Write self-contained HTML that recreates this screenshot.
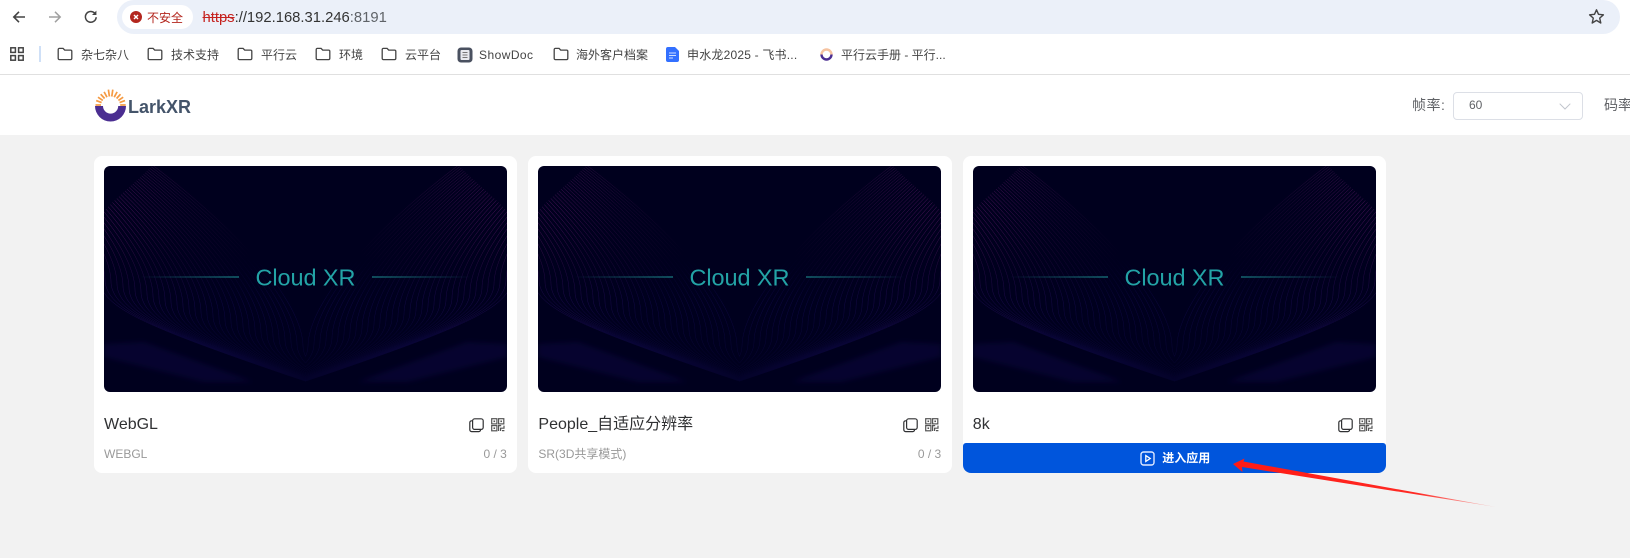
<!DOCTYPE html>
<html lang="zh-CN">
<head>
<meta charset="utf-8">
<title>LarkXR</title>
<style>
html,body{margin:0;padding:0;width:1630px;height:558px;overflow:hidden;background:#f2f2f2;font-family:"Liberation Sans","Noto Sans CJK SC",sans-serif}
.a{position:absolute;white-space:nowrap}
.bm{font-size:12px;line-height:16px;top:47px;color:#444;font-family:"Liberation Sans","Noto Sans CJK SC",sans-serif}
.ic{position:absolute;display:block}
.card{position:absolute;top:156px;width:423.3px;height:317px;background:#fff;border-radius:8px}
.img{position:absolute;left:10px;top:10px;width:403px;height:226px;border-radius:6px;overflow:hidden;background:#00001e}
.t{position:absolute;left:10px;top:259px;font-size:16px;line-height:20px;color:#303133;white-space:nowrap}
.s{position:absolute;left:10px;top:290px;font-size:12px;line-height:16px;color:#999;white-space:nowrap}
.n{position:absolute;right:10.500px;top:290px;font-size:12px;line-height:16px;color:#999;white-space:nowrap}
.cp{position:absolute;left:375px;top:262px}
.qr{position:absolute;left:396.500px;top:261.500px}
</style>
</head>
<body>
<svg width="0" height="0" style="position:absolute">
<defs>
<path id="fo" d="M1.2 2.6a1.2 1.2 0 0 1 1.2-1.2h3.7l1.6 1.7h5.9a1.2 1.2 0 0 1 1.2 1.2v7.1a1.2 1.2 0 0 1-1.2 1.2H2.4a1.2 1.2 0 0 1-1.2-1.2z" fill="none" stroke="#444" stroke-width="1.3"/>
<path id="l0" d="M-220-120C-100-50 18 60 19 120C20 150 70 170 210 218" fill="none" stroke-width=".5"/>
<g id="fam">
<use href="#l0" x="-24" y="-8"/><use href="#l0" x="-18" y="-6"/><use href="#l0" x="-12" y="-4"/><use href="#l0" x="-6" y="-2"/><use href="#l0"/><use href="#l0" x="6" y="2"/><use href="#l0" x="12" y="4"/><use href="#l0" x="18" y="6"/><use href="#l0" x="24" y="8"/><use href="#l0" x="30" y="10"/><use href="#l0" x="36" y="12"/><use href="#l0" x="42" y="14"/><use href="#l0" x="48" y="16"/><use href="#l0" x="54" y="18"/><use href="#l0" x="60" y="20"/><use href="#l0" x="66" y="22"/><use href="#l0" x="72" y="24"/><use href="#l0" x="78" y="26"/><use href="#l0" x="84" y="28"/><use href="#l0" x="90" y="30"/><use href="#l0" x="96" y="32"/><use href="#l0" x="102" y="34"/><use href="#l0" x="108" y="36"/><use href="#l0" x="114" y="38"/><use href="#l0" x="120" y="40"/><use href="#l0" x="126" y="42"/><use href="#l0" x="132" y="44"/><use href="#l0" x="138" y="46"/><use href="#l0" x="144" y="48"/><use href="#l0" x="150" y="50"/><use href="#l0" x="156" y="52"/><use href="#l0" x="162" y="54"/><use href="#l0" x="168" y="56"/><use href="#l0" x="174" y="58"/><use href="#l0" x="180" y="60"/>
</g>
<clipPath id="hc"><path d="M48 0H201.6V226H0V45C14 30 32 16 48 0Z"/></clipPath>
<radialGradient id="rg" gradientUnits="userSpaceOnUse" cx="15" cy="40" r="145">
<stop offset="0" stop-color="#fff" stop-opacity=".7"/><stop offset=".45" stop-color="#fff" stop-opacity=".28"/><stop offset="1" stop-color="#fff" stop-opacity="0"/>
</radialGradient>
<linearGradient id="bg3" gradientUnits="userSpaceOnUse" x1="0" y1="90" x2="0" y2="226">
<stop offset="0" stop-color="#000"/><stop offset=".35" stop-color="#999"/><stop offset=".7" stop-color="#666"/><stop offset="1" stop-color="#222"/>
</linearGradient>
<mask id="m1" maskUnits="userSpaceOnUse" x="0" y="0" width="202" height="226"><rect width="202" height="226" fill="url(#rg)"/></mask>
<mask id="m2" maskUnits="userSpaceOnUse" x="0" y="0" width="202" height="226"><rect width="202" height="226" fill="url(#bg3)"/></mask>
<linearGradient id="tl" x1="0" x2="1"><stop offset="0" stop-color="#1f9a9a" stop-opacity="0"/><stop offset="1" stop-color="#1f9a9a"/></linearGradient>
<linearGradient id="tr" x1="1" x2="0"><stop offset="0" stop-color="#1f9a9a" stop-opacity="0"/><stop offset="1" stop-color="#1f9a9a"/></linearGradient>
<filter id="bl" x="-20%" y="-20%" width="140%" height="140%"><feGaussianBlur stdDeviation="3"/></filter>
<g id="half">
<path d="M0 178L40 176L150 216L100 216L0 191Z" fill="#150a58" opacity=".3" filter="url(#bl)"/>
<g clip-path="url(#hc)">
<g mask="url(#m1)" stroke="#7a2080"><use href="#fam"/></g>
<g mask="url(#m2)" stroke="#1e1270" opacity=".75"><use href="#fam"/></g>
</g>
</g>
<symbol id="art" viewBox="0 0 403 226">
<use href="#half"/>
<use href="#half" transform="matrix(-1 0 0 1 403 0)"/>
<rect x="36" y="110.5" width="99" height="1" fill="url(#tl)"/>
<rect x="268" y="110.5" width="99" height="1" fill="url(#tr)"/>
<text x="201.5" y="119.6" text-anchor="middle" textLength="100" font-family="'Liberation Sans',sans-serif" font-size="23.5" fill="#23a3a6">Cloud XR</text>
</symbol>
<g id="copy" fill="none" stroke="#303133" stroke-width="1.2"><rect x="3.6" y=".8" width="10.6" height="10.6" rx="2"/><path d="M3.4 2.8H2.6A1.8 1.8 0 0 0 .8 4.6v7.2c0 1 .8 1.8 1.8 1.8h7.2c1 0 1.8-.8 1.8-1.8v-.4"/></g>
<g id="qrc" fill="none" stroke="#555" stroke-width="1.2"><rect x=".7" y=".7" width="5.2" height="5.2"/><rect x="7.6" y=".7" width="5.2" height="5.2"/><rect x=".7" y="7.6" width="5.2" height="5.2"/><path d="M7.6 13V7.6H10.2M13 7.6V10.2H9.6V13M11 12.6H13.4"/><rect x="2.5" y="2.5" width="1.6" height="1.6" fill="#555" stroke="none"/><rect x="9.4" y="2.5" width="1.6" height="1.6" fill="#555" stroke="none"/><rect x="2.5" y="9.4" width="1.6" height="1.6" fill="#555" stroke="none"/></g>
</defs>
</svg>

<!-- browser chrome -->
<div class="a" style="left:0;top:0;width:1630px;height:74px;background:#fff"></div>
<div class="a" style="left:0;top:74px;width:1630px;height:1px;background:#e0e0e0"></div>
<div class="a" style="left:117px;top:0;width:1503px;height:34px;background:#ebf0f9;border-radius:17px"></div>
<div class="a" style="left:122px;top:5px;width:71px;height:24px;background:#fff;border-radius:12px"></div>

<svg class="ic" style="left:11px;top:9px" width="16" height="16" viewBox="0 0 16 16"><path d="M14 8H3M8 2.8L2.8 8L8 13.2" fill="none" stroke="#444" stroke-width="1.6"/></svg>
<svg class="ic" style="left:47px;top:9px" width="16" height="16" viewBox="0 0 16 16"><path d="M2 8H13M8 2.8L13.2 8L8 13.2" fill="none" stroke="#a0a0a0" stroke-width="1.5"/></svg>
<svg class="ic" style="left:83px;top:9px" width="16" height="16" viewBox="0 0 16 16"><path d="M13.2 8.2A5.4 5.4 0 1 1 11.6 4" fill="none" stroke="#444" stroke-width="1.5"/><path d="M13.4 1.6V6H9" fill="#444"/></svg>
<svg class="ic" style="left:130px;top:11px" width="12" height="12" viewBox="0 0 12 12"><circle cx="6" cy="6" r="6" fill="#b3261e"/><path d="M4 4L8 8M8 4L4 8" stroke="#fff" stroke-width="1.4"/></svg>
<div class="a" style="left:147px;top:9.500px;font-size:12px;line-height:16px;color:#b3261e">不安全</div>
<div class="a" style="left:202.5px;top:9px;font-size:14.8px;line-height:18px;color:#333"><span style="color:#c5221f;text-decoration:line-through">https</span>://192.168.31.246<span style="color:#5f6368">:8191</span></div>
<svg class="ic" style="left:1588px;top:8px" width="17" height="17" viewBox="0 0 17 17"><path d="M8.5 1.8L10.5 6.3L15.4 6.8L11.7 10.1L12.8 15L8.5 12.4L4.2 15L5.3 10.1L1.6 6.8L6.5 6.3Z" fill="none" stroke="#444" stroke-width="1.4" stroke-linejoin="round"/></svg>

<!-- bookmarks -->
<svg class="ic" style="left:10px;top:47px" width="14" height="14" viewBox="0 0 14 14"><g fill="none" stroke="#444" stroke-width="1.5"><rect x=".8" y=".8" width="4.6" height="4.6"/><rect x="8.6" y=".8" width="4.6" height="4.6"/><rect x=".8" y="8.6" width="4.6" height="4.6"/><rect x="8.6" y="8.6" width="4.6" height="4.6"/></g></svg>
<div class="a" style="left:39px;top:46px;width:1.5px;height:16px;background:#cfe0f7"></div>

<svg class="ic" style="left:57px;top:47px" width="16" height="14"><use href="#fo"/></svg>
<div class="a bm" style="left:81px">杂七杂八</div>
<svg class="ic" style="left:147px;top:47px" width="16" height="14"><use href="#fo"/></svg>
<div class="a bm" style="left:171px">技术支持</div>
<svg class="ic" style="left:237px;top:47px" width="16" height="14"><use href="#fo"/></svg>
<div class="a bm" style="left:261px">平行云</div>
<svg class="ic" style="left:315px;top:47px" width="16" height="14"><use href="#fo"/></svg>
<div class="a bm" style="left:339px">环境</div>
<svg class="ic" style="left:381px;top:47px" width="16" height="14"><use href="#fo"/></svg>
<div class="a bm" style="left:405px">云平台</div>
<svg class="ic" style="left:457px;top:47px" width="16" height="16" viewBox="0 0 16 16"><rect x=".5" y=".5" width="15" height="15" rx="3.5" fill="#4a5160"/><rect x="3.5" y="3" width="9" height="10" rx="1" fill="#e8eaee"/><path d="M5.5 5.5h5M5.5 8h5M5.5 10.5h5" stroke="#777" stroke-width=".9"/></svg>
<div class="a bm" style="left:479px;letter-spacing:.45px">ShowDoc</div>
<svg class="ic" style="left:553px;top:47px" width="16" height="14"><use href="#fo"/></svg>
<div class="a bm" style="left:576px">海外客户档案</div>
<svg class="ic" style="left:666px;top:47px" width="13" height="15" viewBox="0 0 13 15"><path d="M2 0H9L13 4V13a2 2 0 0 1-2 2H2a2 2 0 0 1-2-2V2A2 2 0 0 1 2 0Z" fill="#3370ff"/><path d="M3 6h7M3 8.5h7M3 11h4" stroke="#cfe0ff" stroke-width="1"/></svg>
<div class="a bm" style="left:687px;letter-spacing:.2px">申水龙2025 - 飞书...</div>
<svg class="ic" style="left:820px;top:48px" width="13" height="13" viewBox="0 0 13 13"><path d="M1.5 6.5a5 5 0 0 1 10 0" fill="none" stroke="#f6c3a0" stroke-width="2.4"/><path d="M1.5 6.5a5 5 0 0 0 10 0" fill="none" stroke="#4b2e91" stroke-width="2.4"/></svg>
<div class="a bm" style="left:841px">平行云手册 - 平行...</div>

<!-- app header -->
<div class="a" style="left:0;top:75px;width:1630px;height:60px;background:#fff"></div>
<svg class="ic" style="left:94px;top:88px" width="33" height="34" viewBox="0 0 33 34">
<g stroke="#f59a42" stroke-width="1.7" fill="none"><path d="M7 17H1.5"/><path d="M7.6 14.6L2.2 12.6"/><path d="M8.8 12.400L4 9.200"/><path d="M10.6 10.500L6.700 6.200"/><path d="M13 9.200L10.100 3.900"/><path d="M15.4 8.500L14.4 1.600"/><path d="M17.8 8.500L18.8 1.600"/><path d="M20.200 9.200L23.100 3.900"/><path d="M22.600 10.500L26.500 6.200"/><path d="M24.400 12.400L29.200 9.200"/><path d="M25.600 14.600L31 12.600"/><path d="M26.200 17H31.700"/></g>
<path d="M1 18H9A7.6 7.6 0 0 0 24.200 18H32A15.5 15.5 0 0 1 1 18Z" fill="#4b2e91"/>
</svg>
<div class="a" style="left:128px;top:96px;font-size:18px;line-height:22px;font-weight:bold;color:#44546a">LarkXR</div>
<div class="a" style="left:1412px;top:96px;font-size:14px;line-height:18px;color:#606266;letter-spacing:.5px">帧率:</div>
<div class="a" style="left:1453px;top:92px;width:128px;height:26px;border:1px solid #dcdfe6;border-radius:4px;background:#fff"></div>
<div class="a" style="left:1469px;top:97px;font-size:12px;line-height:16px;color:#606266">60</div>
<svg class="ic" style="left:1559px;top:103px" width="12" height="7" viewBox="0 0 12 7"><path d="M.7.7L6 6L11.3.7" fill="none" stroke="#c0c4cc" stroke-width="1"/></svg>
<div class="a" style="left:1604px;top:96px;font-size:14px;line-height:18px;color:#606266">码率</div>

<!-- cards -->
<div class="card" style="left:94px">
  <div class="img"><svg width="403" height="226" style="display:block"><use href="#art" width="403" height="226"/></svg></div>
  <div class="t">WebGL</div>
  <svg class="cp" width="15" height="15"><use href="#copy"/></svg>
  <svg class="qr" width="14" height="14"><use href="#qrc"/></svg>
  <div class="s">WEBGL</div>
  <div class="n">0 / 3</div>
</div>
<div class="card" style="left:528.4px">
  <div class="img"><svg width="403" height="226" style="display:block"><use href="#art" width="403" height="226"/></svg></div>
  <div class="t">People_自适应分辨率</div>
  <svg class="cp" width="15" height="15"><use href="#copy"/></svg>
  <svg class="qr" width="14" height="14"><use href="#qrc"/></svg>
  <div class="s">SR(3D共享模式)</div>
  <div class="n">0 / 3</div>
</div>
<div class="card" style="left:962.8px">
  <div class="img"><svg width="403" height="226" style="display:block"><use href="#art" width="403" height="226"/></svg></div>
  <div class="t">8k</div>
  <svg class="cp" width="15" height="15"><use href="#copy"/></svg>
  <svg class="qr" width="14" height="14"><use href="#qrc"/></svg>
  <div style="position:absolute;left:0;top:287px;width:423.3px;height:30px;background:#0055dc;border-radius:3px 3px 8px 8px"></div>
  <svg class="ic" style="left:177px;top:295px" width="15" height="15" viewBox="0 0 15 15"><rect x="1" y="1" width="13" height="13" rx="2.5" fill="none" stroke="#dfe9ff" stroke-width="1.4"/><path d="M5.8 4.6L10.2 7.5L5.8 10.4Z" fill="none" stroke="#fff" stroke-width="1.3"/></svg>
  <div style="position:absolute;left:199.5px;top:294px;font-size:12px;line-height:16px;font-weight:bold;color:#fff;white-space:nowrap">进入应用</div>
</div>

<!-- annotation arrow -->
<svg class="ic" style="left:0;top:0;pointer-events:none" width="1630" height="558" viewBox="0 0 1630 558">
<defs><linearGradient id="ar" gradientUnits="userSpaceOnUse" x1="1234" y1="464" x2="1496" y2="507"><stop offset="0" stop-color="#ff1a14"/><stop offset=".7" stop-color="#ff2a24"/><stop offset="1" stop-color="#ff3a34" stop-opacity=".25"/></linearGradient></defs>
<path d="M1233 464L1244.500 458.500L1243.500 461.500L1496 507L1242 467L1242.500 472Z" fill="url(#ar)"/>
</svg>
</body>
</html>
